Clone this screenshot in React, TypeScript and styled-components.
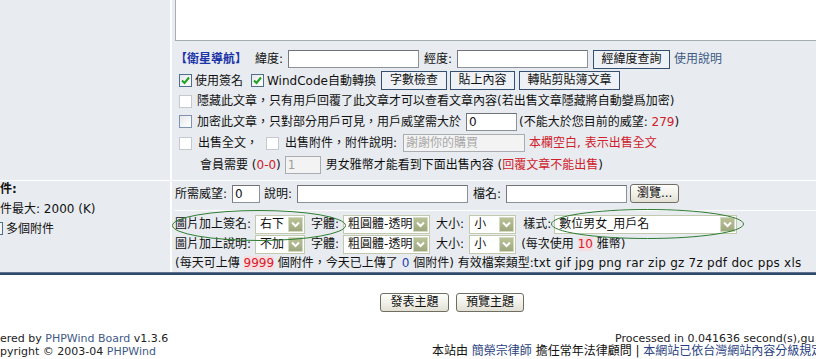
import React from 'react';
import styled, { createGlobalStyle } from 'styled-components';

const Global = createGlobalStyle`
  html, body { margin: 0; padding: 0; background: #fff; }
  body {
    width: 816px; height: 359px; overflow: hidden;
    font-family: "DejaVu Sans", "Noto Sans CJK TC", sans-serif;
    font-size: 12px; color: #111;
  }
  * { box-sizing: border-box; }
`;

const Page = styled.div`
  width: 904px;
  position: relative;
`;

const FormTable = styled.div`
  display: grid;
  grid-template-columns: 170px 1fr;
  column-gap: 2px;
  row-gap: 1px;
  background: #fff;
`;

const Cell = styled.div<{ pl?: number; pb?: number }>`
  background: #e8ecf0;
  padding-left: ${p => p.pl ?? 0}px;
  padding-bottom: ${p => p.pb ?? 0}px;
  display: flex;
  flex-direction: column;
  min-width: 0;
`;

const Section = styled.div<{ pt?: number; pb?: number; sep?: boolean }>`
  padding-top: ${p => p.pt ?? 0}px;
  padding-bottom: ${p => p.pb ?? 0}px;
  border-bottom: ${p => (p.sep ? '1px solid #fff' : 'none')};
  display: flex;
  flex-direction: column;
`;

const Editor = styled.textarea`
  display: block;
  width: 740px;
  height: 41px;
  margin: 0 0 7px 0;
  border: 1px solid #a5adb5;
  border-top-width: 0;
  background: #fff;
  resize: none;
  outline: none;
`;

const Line = styled.div<{ h: number }>`
  display: flex;
  align-items: center;
  height: ${p => p.h}px;
  white-space: pre;
  line-height: 14px;
`;

const Txt = styled.span<{ ml?: number; tone?: 'red' | 'blue' | 'link' | 'nav' | 'dark' }>`
  margin-left: ${p => p.ml ?? 0}px;
  color: ${p =>
    p.tone === 'red' ? '#d0202a' :
    p.tone === 'blue' ? '#1f3fb0' :
    p.tone === 'link' ? '#3e5a85' :
    p.tone === 'nav' ? '#1c34a8' : 'inherit'};
  font-weight: ${p => (p.tone === 'nav' ? 700 : 400)};
`;

const Latin = styled.span`
  letter-spacing: 0.25px;
`;

const Hot = styled.span`
  color: #d8202c;
  background: #f6dde0;
`;

const Bold = styled.span`
  font-weight: 700;
`;

const Field = styled.input<{ w: number; ml?: number }>`
  width: ${p => p.w}px;
  height: 18px;
  margin: 0 0 0 ${p => p.ml ?? 0}px;
  padding: 0 2px;
  border: 1px solid #8d9298;
  border-top-color: #6f7378;
  border-left-color: #767a80;
  background: #fff;
  font: 12px "DejaVu Sans", "Noto Sans CJK TC", sans-serif;
  color: #111;
  outline: none;
  &:disabled {
    background: #f3f3f3;
    border-color: #a9adb2;
    color: #a0a0a0;
  }
  &::placeholder { color: #a8a8a8; }
`;

const NavButton = styled.button<{ w: number; ml?: number }>`
  width: ${p => p.w}px;
  height: 19px;
  margin: 0 0 0 ${p => p.ml ?? 0}px;
  padding: 0;
  border: 1px solid #34506e;
  background: #eef2f6;
  font: 12px "DejaVu Sans", "Noto Sans CJK TC", sans-serif;
  color: #111;
  line-height: 17px;
`;

const XpButton = styled.button<{ w: number; ml?: number }>`
  width: ${p => p.w}px;
  height: 19px;
  margin: 0 0 0 ${p => p.ml ?? 0}px;
  padding: 0;
  border: 1px solid #6e6e62;
  border-radius: 3px;
  background: linear-gradient(#fdfdfb, #efeee6 60%, #e2e0d4);
  font: 12px "DejaVu Sans", "Noto Sans CJK TC", sans-serif;
  color: #111;
  line-height: 17px;
`;

const Box = styled.span<{ ml?: number; kind: 'on' | 'off' | 'blue' }>`
  display: inline-flex;
  align-items: center;
  justify-content: center;
  width: 13px;
  height: 13px;
  margin-left: ${p => p.ml ?? 0}px;
  border: 1px solid ${p => (p.kind === 'off' ? '#c4c9cf' : p.kind === 'blue' ? '#7d93b0' : '#4f6f8f')};
  background: ${p => (p.kind === 'off' ? '#fff' : 'linear-gradient(135deg,#e6e8ea,#fff)')};
  flex: none;
`;

const PartBox = styled.span`
  display: inline-block;
  width: 3px;
  height: 13px;
  border: 1px solid #4f6f8f;
  border-left: none;
  background: #f4f4f4;
`;

const SelectBox = styled.span<{ w: number; ml?: number }>`
  display: inline-flex;
  align-items: center;
  justify-content: space-between;
  width: ${p => p.w}px;
  height: 19px;
  margin-left: ${p => p.ml ?? 0}px;
  padding: 1px 1px 1px 4px;
  border: 1px solid #c3c9ad;
  background: #fff;
  flex: none;
`;

const ArrowBtn = styled.span`
  display: inline-flex;
  align-items: center;
  justify-content: center;
  width: 15px;
  height: 15px;
  border: 1px solid #d6dac4;
  background: linear-gradient(#b9c197, #9ea87e);
`;

const Rule = styled.div`
  height: 3px;
  background: #2f4a6a;
  border-top: 1px solid #5b7391;
`;

const Actions = styled.div`
  display: flex;
  justify-content: center;
  gap: 7px;
  padding-top: 18px;
`;

const Footer = styled.div`
  display: grid;
  grid-template-columns: 432px 1fr;
  margin-top: 20px;
  line-height: 13px;
  white-space: nowrap;
`;

const FootLatin = styled.div<{ ml?: number }>`
  font-family: "DejaVu Sans", sans-serif;
  font-size: 11px;
  height: 13px;
  margin-left: ${p => p.ml ?? 0}px;
  color: #222;
`;

const FootCjk = styled.div`
  font-size: 12px;
  height: 14px;
  color: #111;
`;

const FootLink = styled.span`
  color: #3e5a85;
`;

const FootNav = styled.span`
  color: #2a3f80;
`;

const Ring = styled.svg`
  position: absolute;
  overflow: visible;
  pointer-events: none;
`;

const Check = () => (
  <svg width="9" height="9" viewBox="0 0 9 9">
    <path d="M1 4.5 L3.5 7 L8 1.5" fill="none" stroke="#21a121" strokeWidth="2" />
  </svg>
);

const Chevron = () => (
  <svg width="9" height="7" viewBox="0 0 9 7">
    <path d="M1 1.5 L4.5 5 L8 1.5" fill="none" stroke="#fff" strokeWidth="2" />
  </svg>
);

const Select = ({ w, ml, value }: { w: number; ml?: number; value: string }) => (
  <SelectBox w={w} ml={ml}>
    <span>{value}</span>
    <ArrowBtn><Chevron /></ArrowBtn>
  </SelectBox>
);

export default function App() {
  return (
    <>
      <Global />
      <Page>
        <FormTable>
          <Cell />
          <Cell pl={3} pb={4}>
            <Editor readOnly />
            <Line h={22}>
              <Txt tone="nav">【衛星導航】</Txt>
              <Txt ml={8}>緯度:</Txt>
              <Field w={131} ml={5} />
              <Txt ml={5}>經度:</Txt>
              <Field w={131} ml={5} />
              <NavButton w={77} ml={5}>經緯度查詢</NavButton>
              <Txt ml={4} tone="link">使用說明</Txt>
            </Line>
            <Line h={21}>
              <Box kind="on" ml={4}><Check /></Box>
              <Txt ml={3}>使用簽名</Txt>
              <Box kind="on" ml={8}><Check /></Box>
              <Txt ml={3}>WindCode自動轉換</Txt>
              <NavButton w={66} ml={5}>字數檢查</NavButton>
              <NavButton w={65} ml={3}>貼上內容</NavButton>
              <NavButton w={101} ml={4}>轉貼剪貼簿文章</NavButton>
            </Line>
            <Line h={20}>
              <Box kind="off" ml={4} />
              <Txt ml={5}>隱藏此文章，只有用戶回覆了此文章才可以查看文章內容(若出售文章隱藏將自動變爲加密)</Txt>
            </Line>
            <Line h={21}>
              <Box kind="blue" ml={4} />
              <Txt ml={5}>加密此文章，只對部分用戶可見，用戶威望需大於</Txt>
              <Field w={51} ml={5} defaultValue="0" />
              <Txt ml={2}>(不能大於您目前的威望: <Txt tone="red">279</Txt>)</Txt>
            </Line>
            <Line h={22}>
              <Box kind="off" ml={4} />
              <Txt ml={6}>出售全文，</Txt>
              <Box kind="off" ml={8} />
              <Txt ml={6}>出售附件，附件說明:</Txt>
              <Field w={122} ml={6} disabled placeholder="謝謝你的購買" />
              <Txt ml={4} tone="red">本欄空白, 表示出售全文</Txt>
            </Line>
            <Line h={22}>
              <Txt ml={25}>會員需要 (<Txt tone="red">0-0</Txt>)</Txt>
              <Field w={36} ml={4} disabled defaultValue="1" />
              <Txt ml={5}>男女雅幣才能看到下面出售內容 (<Txt tone="red">回覆文章不能出售</Txt>)</Txt>
            </Line>
          </Cell>

          <Cell>
            <Line h={15}><Bold>件:</Bold></Line>
            <Line h={25}>件最大: 2000 (K)</Line>
            <Line h={15}><PartBox /><Txt ml={3}>多個附件</Txt></Line>
          </Cell>
          <Cell pl={3}>
            <Section pb={4} sep>
              <Line h={25}>
                <Txt>所需威望:</Txt>
                <Field w={28} ml={5} defaultValue="0" />
                <Txt ml={4}>說明:</Txt>
                <Field w={171} ml={5} />
                <Txt ml={5}>檔名:</Txt>
                <Field w={121} ml={5} />
                <XpButton w={49} ml={3}>瀏覽...</XpButton>
              </Line>
            </Section>
            <Section pt={3}>
              <Line h={20}>
                <Txt>圖片加上簽名:</Txt>
                <Select w={50} ml={4} value="右下" />
                <Txt ml={6}>字體:</Txt>
                <Select w={87} ml={4} value="粗圓體-透明" />
                <Txt ml={6}>大小:</Txt>
                <Select w={47} ml={5} value="小" />
                <Txt ml={7}>樣式:</Txt>
                <Select w={183} ml={3} value="數位男女_用戶名" />
              </Line>
              <Line h={20}>
                <Txt>圖片加上說明:</Txt>
                <Select w={50} ml={4} value="不加" />
                <Txt ml={6}>字體:</Txt>
                <Select w={87} ml={4} value="粗圓體-透明" />
                <Txt ml={6}>大小:</Txt>
                <Select w={47} ml={5} value="小" />
                <Txt ml={5}>(每次使用 <Hot>10</Hot> 雅幣)</Txt>
              </Line>
              <Line h={18}>
                <Txt>(每天可上傳 <Hot>9999</Hot> 個附件，今天已上傳了 <Txt tone="blue">0</Txt> 個附件) 有效檔案類型:<Latin>txt gif jpg png rar zip gz 7z pdf doc pps xls</Latin></Txt>
              </Line>
            </Section>
          </Cell>
        </FormTable>
        <Rule />
        <Actions>
          <XpButton w={69}>發表主題</XpButton>
          <XpButton w={68}>預覽主題</XpButton>
        </Actions>
        <Footer>
          <div>
            <FootLatin>ered by <FootLink>PHPWind Board</FootLink> v1.3.6</FootLatin>
            <FootLatin>pyright © 2003-04 <FootLink>PHPWind</FootLink></FootLatin>
          </div>
          <div>
            <FootLatin ml={183}>Processed in 0.041636 second(s),gu</FootLatin>
            <FootCjk>本站由 <FootNav>簡榮宗律師</FootNav> 擔任常年法律顧問 | <FootNav>本網站已依台灣網站內容分級規定處理</FootNav></FootCjk>
          </div>
        </Footer>
        <Ring style={{ left: 172, top: 210 }} width="174" height="31" viewBox="0 0 174 31">
          <ellipse cx="87" cy="15.5" rx="86.5" ry="15" fill="none" stroke="#2f7d32" strokeWidth="1" />
        </Ring>
        <Ring style={{ left: 551, top: 209 }} width="193" height="30" viewBox="0 0 193 30">
          <ellipse cx="96.5" cy="15" rx="96" ry="14.5" fill="none" stroke="#2f7d32" strokeWidth="1" />
        </Ring>
      </Page>
    </>
  );
}
